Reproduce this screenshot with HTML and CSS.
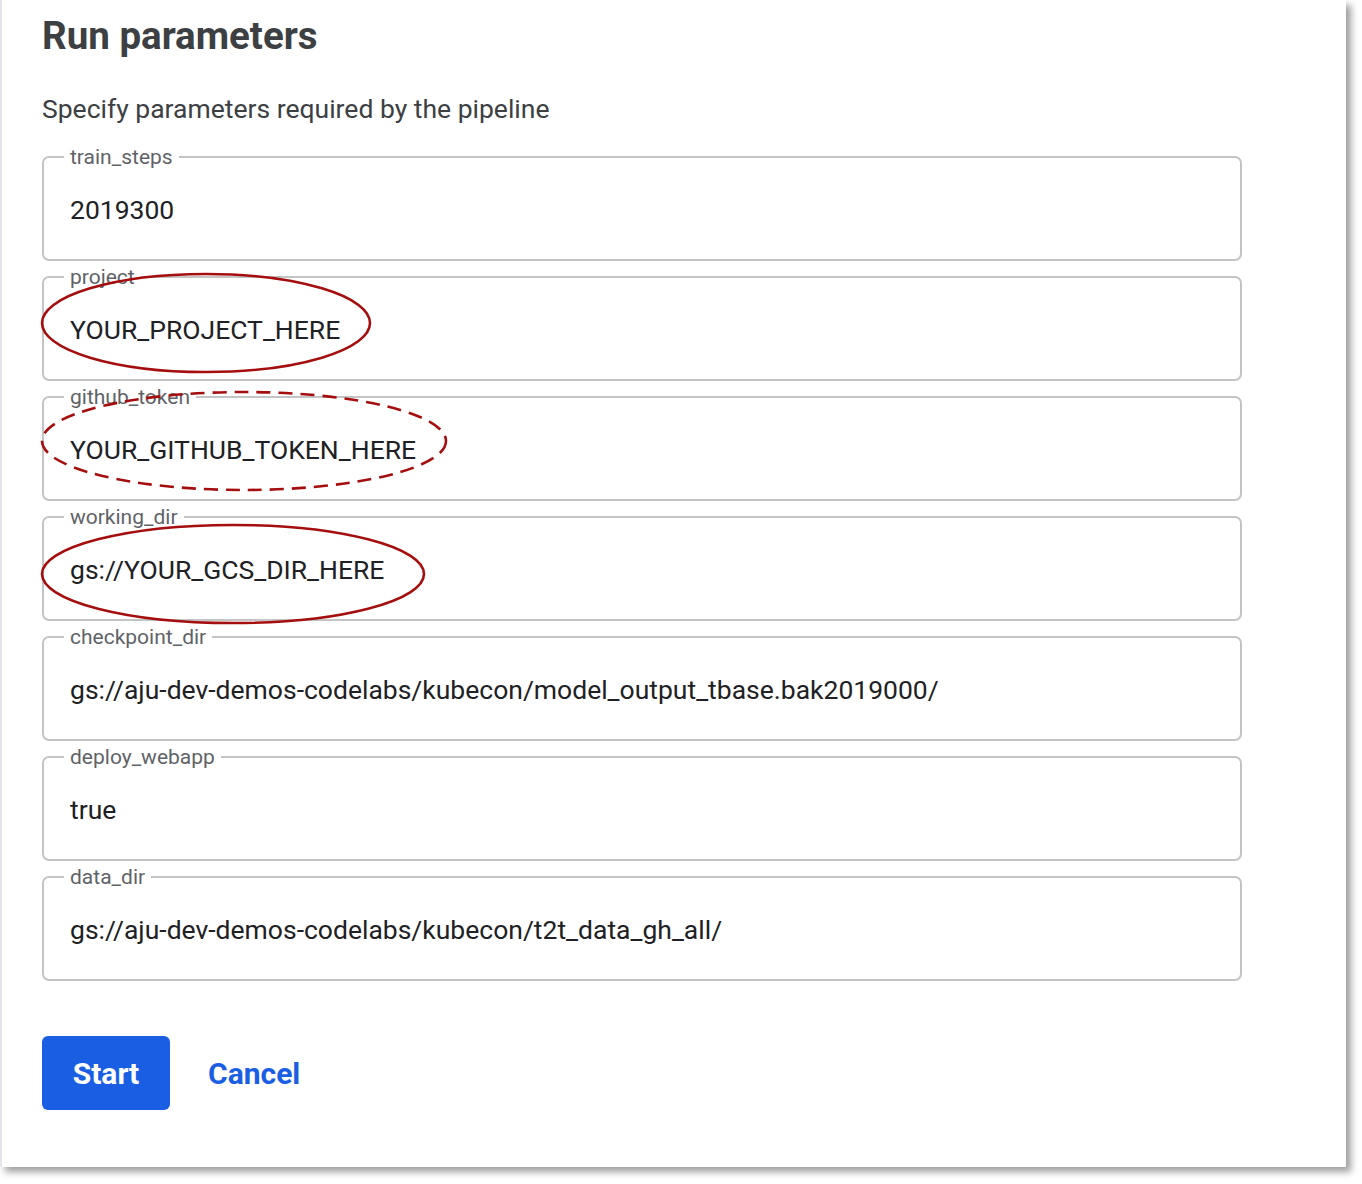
FILE: index.html
```html
<!DOCTYPE html>
<html>
<head>
<meta charset="utf-8">
<link rel="stylesheet" href="styles.css">
</head>
<body>
<div class="card">
  <h1 class="title">Run parameters</h1>
  <p class="subtitle">Specify parameters required by the pipeline</p>
  <div class="fields">
    <fieldset class="field"><legend>train_steps</legend><div class="value">2019300</div></fieldset>
    <fieldset class="field"><legend>project</legend><div class="value">YOUR_PROJECT_HERE</div></fieldset>
    <fieldset class="field"><legend>github_token</legend><div class="value">YOUR_GITHUB_TOKEN_HERE</div></fieldset>
    <fieldset class="field"><legend>working_dir</legend><div class="value">gs://YOUR_GCS_DIR_HERE</div></fieldset>
    <fieldset class="field"><legend>checkpoint_dir</legend><div class="value">gs://aju-dev-demos-codelabs/kubecon/model_output_tbase.bak2019000/</div></fieldset>
    <fieldset class="field"><legend>deploy_webapp</legend><div class="value">true</div></fieldset>
    <fieldset class="field"><legend>data_dir</legend><div class="value">gs://aju-dev-demos-codelabs/kubecon/t2t_data_gh_all/</div></fieldset>
  </div>
  <div class="actions">
    <button class="btn-start">Start</button>
    <button class="btn-cancel">Cancel</button>
  </div>
  <svg class="annotations" width="1346" height="1167" viewBox="0 0 1346 1167">
    <ellipse cx="206" cy="323" rx="164" ry="49" fill="none" stroke="#a50e0e" stroke-width="2.6"/>
    <ellipse cx="244" cy="441" rx="202" ry="49" fill="none" stroke="#a50e0e" stroke-width="2.6" stroke-dasharray="14 8"/>
    <ellipse cx="233" cy="574" rx="191" ry="49" fill="none" stroke="#a50e0e" stroke-width="2.6"/>
  </svg>
</div>
</body>
</html>
```
FILE: styles.css
```css
html, body {
  margin: 0;
  padding: 0;
  background: #ffffff;
}
body {
  font-family: Roboto, "Liberation Sans", sans-serif;
  width: 1362px;
  height: 1184px;
  overflow: hidden;
}
.card {
  position: relative;
  box-sizing: border-box;
  width: 1346px;
  height: 1167px;
  background: #fff;
  border-left: 2px solid #e4e4ea;
  box-shadow: 5px 5px 7px rgba(0, 0, 0, 0.38);
  padding: 14px 0 0 40px;
}
.title {
  margin: 0;
  font-size: 38.5px;
  line-height: 44px;
  font-weight: 700;
  color: #3c4043;
}
.subtitle {
  margin: 35px 0 0 0;
  font-size: 26.5px;
  line-height: 32px;
  color: #3c4043;
}
.fields {
  display: flex;
  flex-direction: column;
  gap: 5px;
  margin-top: 21px;
  width: 1200px;
}
.field {
  margin: 0;
  border: 2px solid #c4c4c4;
  border-radius: 7px;
  padding: 0 20px 0 20px;
  height: 115px;
  box-sizing: border-box;
}
.field legend {
  padding: 0 6px;
  font-size: 21px;
  line-height: 22px;
  color: #5f6368;
}
.value {
  padding: 27px 6px 0 6px;
  font-size: 26.5px;
  line-height: 30px;
  color: #202124;
}
.actions {
  display: flex;
  align-items: center;
  gap: 38px;
  margin-top: 55px;
}
.btn-start {
  width: 128px;
  height: 74px;
  border: none;
  border-radius: 6px;
  background: #1a5ee3;
  color: #fff;
  font-family: inherit;
  font-size: 30px;
  font-weight: 700;
  padding: 0;
}
.btn-cancel {
  border: none;
  background: none;
  padding: 0;
  color: #1a5ee3;
  font-family: inherit;
  font-size: 30px;
  font-weight: 700;
}
.annotations {
  position: absolute;
  left: -2px;
  top: 0;
  pointer-events: none;
}
```
